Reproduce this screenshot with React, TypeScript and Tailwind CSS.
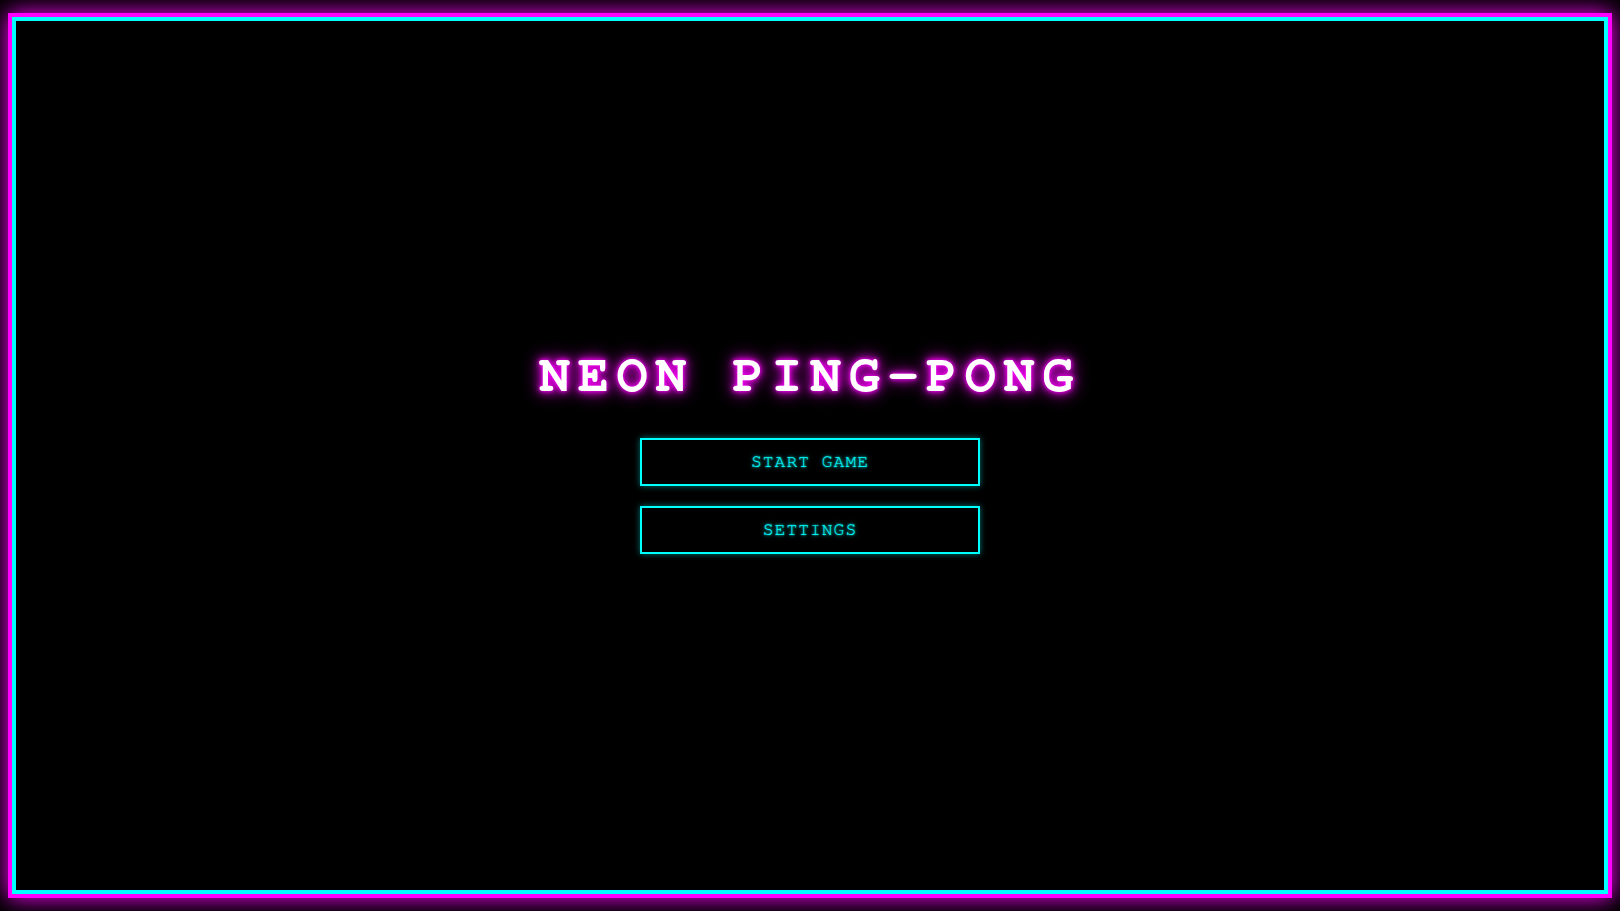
import React from "react";

const menuItems = ["START GAME", "SETTINGS"];

const MenuButton = ({ label }: { label: string }) => (
  <button
    type="button"
    className="w-[340px] h-12 border-2 border-[#00ffff] bg-black text-[#00ffff] text-lg tracking-[1px] font-['FreeMono','Liberation_Mono',monospace] shadow-[0_0_6px_rgba(0,255,255,0.45)] [text-shadow:0_0_2px_#00ffff,0_0_5px_rgba(0,255,255,0.7)] cursor-pointer"
  >
    {label}
  </button>
);

export default function App() {
  return (
    <div className="h-screen w-full bg-black flex items-center justify-center overflow-hidden">
      {/* outer magenta frame with glow */}
      <div className="w-[calc(100%-16px)] h-[calc(100vh-26px)] border-4 border-[#ff00ff] shadow-[0_0_22px_#ff00ff] flex">
        {/* inner cyan frame */}
        <div className="flex-1 border-4 border-[#00ffff] bg-black flex flex-col items-center justify-center">
          <h1 className="text-[52px] leading-[37px] font-bold text-white tracking-[7.5px] mb-11 font-['FreeMono','Liberation_Mono',monospace] [text-shadow:0_0_4px_#ff00ff,0_0_10px_#ff00ff,0_0_18px_#ff00ff]">
            NEON PING-PONG
          </h1>
          <div className="flex flex-col gap-5">
            {menuItems.map((item) => (
              <MenuButton key={item} label={item} />
            ))}
          </div>
        </div>
      </div>
    </div>
  );
}
